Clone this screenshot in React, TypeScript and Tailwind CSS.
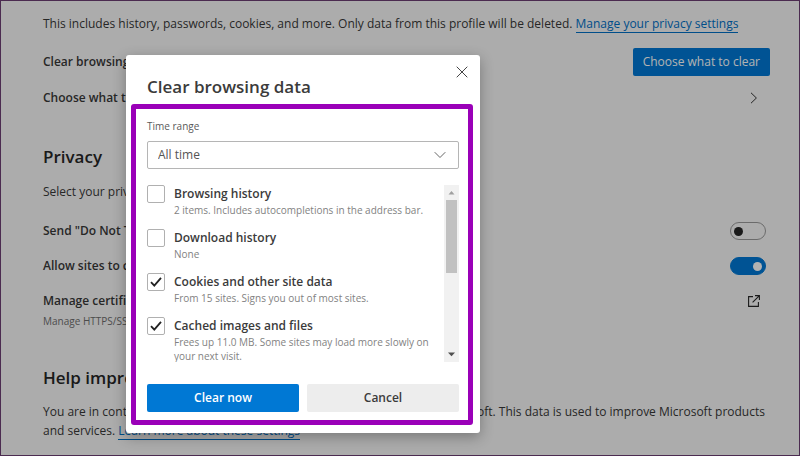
import { useState } from 'react'

interface DataItem {
  id: string
  title: string
  detail: string
}

const DATA_ITEMS: DataItem[] = [
  { id: 'history', title: 'Browsing history', detail: '2 items. Includes autocompletions in the address bar.' },
  { id: 'downloads', title: 'Download history', detail: 'None' },
  { id: 'cookies', title: 'Cookies and other site data', detail: 'From 15 sites. Signs you out of most sites.' },
  { id: 'cache', title: 'Cached images and files', detail: 'Frees up 11.0 MB. Some sites may load more slowly on your next visit.' },
]

const TIME_RANGES = ['Last hour', 'Last 24 hours', 'Last 7 days', 'Last 4 weeks', 'All time']

function Toggle({ id, defaultChecked }: { id: string; defaultChecked?: boolean }) {
  return (
    <input
      id={id}
      type="checkbox"
      role="switch"
      defaultChecked={defaultChecked}
      className="mr-1 flex h-[18px] w-9 appearance-none items-center rounded-full border border-[#9a9a9a] px-[3px] before:size-[9px] before:rounded-full before:bg-[#262626] checked:justify-end checked:border-[#0078d4] checked:bg-[#0078d4] checked:before:bg-white"
    />
  )
}

function SettingsPage() {
  return (
    <main className="pt-[14px] pr-[41px] pb-3 pl-[42px] text-[12px] leading-[18px] text-[#383838]">
      <p>
        This includes history, passwords, cookies, and more. Only data from this profile will be deleted.{' '}
        <a href="#privacy" className="border-b border-[#0070c6] text-[#0070c6]">Manage your privacy settings</a>
      </p>

      <div className="mt-[15px] -mr-3 flex h-7 items-center justify-between">
        <span className="font-semibold">Clear browsing data now</span>
        <button className="h-7 rounded-xs bg-[#0078d4] px-[10px] whitespace-nowrap text-white">Choose what to clear</button>
      </div>
      <a href="#on-close" className="mt-3 flex h-5 items-center justify-between">
        <span className="font-semibold">Choose what to clear every time you close</span>
        <svg className="-mr-0.5 size-3" viewBox="0 0 12 12" fill="none" stroke="#333" strokeWidth="1">
          <path d="M3 .8 8.4 6 3 11.2" />
        </svg>
      </a>

      <h2 className="mt-[37px] text-[17px] leading-6 font-semibold text-[#262626]">Privacy</h2>
      <p className="mt-[14px]">Select your privacy settings for Microsoft Edge.</p>

      <div className="mt-5 flex flex-col gap-[15px]">
        <div className="-mr-3 flex h-5 items-center justify-between">
          <label htmlFor="dnt" className="font-semibold">Send "Do Not Track" requests</label>
          <Toggle id="dnt" />
        </div>
        <div className="-mr-3 flex h-5 items-center justify-between">
          <label htmlFor="payment" className="font-semibold">Allow sites to check if you have payment info saved</label>
          <Toggle id="payment" defaultChecked />
        </div>
        <a href="#certificates" className="flex items-start justify-between">
          <span>
            <span className="block h-5 leading-5 font-semibold">Manage certificates</span>
            <span className="block text-[10px] leading-5 text-[#6e6e6e]">Manage HTTPS/SSL certificates and settings</span>
          </span>
          <svg className="mt-1 -mr-0.5 size-3" viewBox="0 0 12 12" fill="none" stroke="#262626" strokeWidth="1.1">
            <path d="M5 1.6H.6v9.8h9.8V7M4.6 7.4 11.2.8M7 .6h4.4V5" />
          </svg>
        </a>
      </div>

      <h2 className="mt-[35px] text-[17px] leading-6 font-semibold text-[#262626]">Help improve Microsoft Edge</h2>
      <p className="mt-3 -mr-3 leading-[19px]">
        You are in control of your privacy and the data you agree to share with Microsoft. This data is used to improve Microsoft products and services.{' '}
        <a href="#learn" className="border-b border-[#0070c6] text-[#0070c6]">Learn more about these settings</a>
      </p>
    </main>
  )
}

function ScrollBar() {
  return (
    <div className="flex w-[15px] shrink-0 flex-col items-center bg-[#f1f1f1]" aria-hidden="true">
      <svg className="size-[15px]" viewBox="0 0 15 15">
        <path d="M4.5 9.5 7.5 6l3 3.5z" fill="#a0a0a0" />
      </svg>
      <div className="h-[73px] w-[11px] bg-[#c1c1c1]" />
      <svg className="mt-auto size-[15px]" viewBox="0 0 15 15">
        <path d="M4 5.5 7.5 9.3 11 5.5z" fill="#505050" />
      </svg>
    </div>
  )
}

function ClearDataDialog() {
  const [range, setRange] = useState('All time')
  const [selected, setSelected] = useState<string[]>(['cookies', 'cache'])

  const toggle = (id: string) =>
    setSelected(s => (s.includes(id) ? s.filter(x => x !== id) : [...s, id]))

  return (
    <div
      role="dialog"
      aria-labelledby="dialog-title"
      className="absolute top-[54px] left-[125px] w-[354px] rounded-[3px] bg-white px-[5px] pb-2 text-[#3b3b3b] shadow-[0_4px_14px_rgba(0,0,0,0.3)]"
    >
      <div className="flex h-[49px] items-start justify-between pl-4">
        <h1 id="dialog-title" className="pt-5 text-[17px] leading-6 font-semibold">Clear browsing data</h1>
        <button aria-label="Close" className="mt-[11px] mr-[7px]">
          <svg className="size-3" viewBox="0 0 12 12" stroke="#444" strokeWidth="1">
            <path d="M.7.7l10.6 10.6M11.3.7.7 11.3" />
          </svg>
        </button>
      </div>

      <section className="mr-[2px] rounded-[3px] border-[5px] border-[#9a00b8] pt-2 pr-[9px] pb-2 pl-[11px]">
        <label htmlFor="range" className="block text-[10px] leading-[18px] text-[#5a5a5a]">Time range</label>
        <div className="relative mt-[6px]">
          <select
            id="range"
            value={range}
            onChange={e => setRange(e.target.value)}
            className="block h-7 w-full appearance-none rounded-xs border border-[#b5b5b5] bg-white px-[10px] text-[12px] text-[#555]"
          >
            {TIME_RANGES.map(r => <option key={r}>{r}</option>)}
          </select>
          <svg className="pointer-events-none absolute top-2 right-[13px] size-3" viewBox="0 0 12 12" fill="none" stroke="#666" strokeWidth="1">
            <path d="M.7 3.2 6 8.5l5.3-5.3" />
          </svg>
        </div>

        <div className="mt-4 flex h-[177px] overflow-hidden">
          <ul className="min-w-0 flex-1 space-y-3">
            {DATA_ITEMS.map(item => (
              <li key={item.id} className="flex gap-[9px]">
                <span className="grid size-[18px] shrink-0 place-items-center">
                  <input
                    id={item.id}
                    type="checkbox"
                    checked={selected.includes(item.id)}
                    onChange={() => toggle(item.id)}
                    className="col-start-1 row-start-1 size-[18px] appearance-none rounded-xs border border-[#b0b0b0]"
                  />
                  {selected.includes(item.id) && (
                    <svg className="pointer-events-none col-start-1 row-start-1 size-3" viewBox="0 0 12 12" fill="none" stroke="#222" strokeWidth="1.8">
                      <path d="M1 6.2 4.3 9.7 11 1.8" />
                    </svg>
                  )}
                </span>
                <label htmlFor={item.id} className="block">
                  <span className="block text-[12px] leading-[18px] font-semibold">{item.title}</span>
                  <span className="block text-[10px] leading-[14px] text-[#828282]">{item.detail}</span>
                </label>
              </li>
            ))}
          </ul>
          <ScrollBar />
        </div>

        <div className="mt-[22px] grid grid-cols-2 gap-2 text-[12px] font-semibold">
          <button className="h-7 rounded-xs bg-[#0078d4] text-white">Clear now</button>
          <button className="h-7 rounded-xs bg-[#ededed]">Cancel</button>
        </div>
      </section>
    </div>
  )
}

export default function App() {
  return (
    <div className="relative min-h-screen overflow-hidden border border-[#4b2b50] bg-[#f7f7f7] font-['Open_Sans','Noto_Sans',sans-serif]">
      <SettingsPage />
      <div className="absolute inset-0 bg-black/30">
        <ClearDataDialog />
      </div>
    </div>
  )
}
